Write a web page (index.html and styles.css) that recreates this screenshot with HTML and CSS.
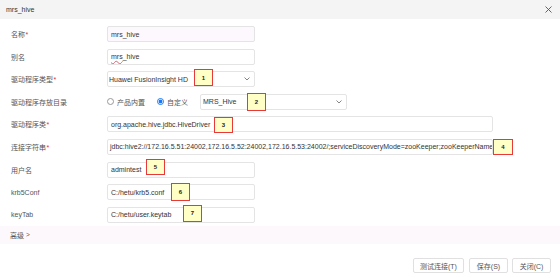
FILE: index.html
```html
<!DOCTYPE html>
<html lang="zh">
<head>
<meta charset="utf-8">
<link rel="stylesheet" href="styles.css">
</head>
<body>
<div class="dialog">
  <div class="titlebar">
    <span class="title">mrs_hive</span>
    <svg class="close" width="7" height="7" viewBox="0 0 7 7"><path d="M0.5 0.5L6.5 6.5M6.5 0.5L0.5 6.5" stroke="#555" stroke-width="0.9" fill="none"/></svg>
  </div>
  <div class="form">
    <div class="row">
      <label class="lbl">名称<span class="req">*</span></label>
      <div class="field w148"><div class="input ro">mrs_hive</div></div>
    </div>
    <div class="row">
      <label class="lbl">别名</label>
      <div class="field w148"><div class="input"><span class="spell">mrs</span>_hive</div></div>
    </div>
    <div class="row">
      <label class="lbl">驱动程序类型<span class="req">*</span></label>
      <div class="field w148">
        <div class="select"><span class="sv">Huawei FusionInsight HD</span><svg class="chev" width="6" height="4" viewBox="0 0 6 4"><path d="M0.5 0.5L3 3L5.5 0.5" stroke="#666" stroke-width="0.8" fill="none"/></svg></div>
        <span class="badge b1">1</span>
      </div>
    </div>
    <div class="row">
      <label class="lbl">驱动程序存放目录</label>
      <div class="radios">
        <span class="radio"><span class="dot"></span>产品内置</span>
        <span class="radio on"><span class="dot"></span>自定义</span>
        <div class="field w147">
          <div class="select"><span class="sv sv2">MRS_Hive</span><svg class="chev" width="6" height="4" viewBox="0 0 6 4"><path d="M0.5 0.5L3 3L5.5 0.5" stroke="#666" stroke-width="0.8" fill="none"/></svg></div>
          <span class="badge b2">2</span>
        </div>
      </div>
    </div>
    <div class="row">
      <label class="lbl">驱动程序类<span class="req">*</span></label>
      <div class="field w386"><div class="input">org.apache.hive.jdbc.HiveDriver</div><span class="badge b3">3</span></div>
    </div>
    <div class="row">
      <label class="lbl">连接字符串<span class="req">*</span></label>
      <div class="field w386"><div class="input tight">jdbc:hive2://172.16.5.51:24002,172.16.5.52:24002,172.16.5.53:24002/;serviceDiscoveryMode=zooKeeper;zooKeeperName</div><span class="badge b4">4</span></div>
    </div>
    <div class="row">
      <label class="lbl">用户名</label>
      <div class="field w148"><div class="input">admintest</div><span class="badge b5">5</span></div>
    </div>
    <div class="row">
      <label class="lbl">krb5Conf</label>
      <div class="field w148"><div class="input">C:/hetu/krb5.conf</div><span class="badge b6">6</span></div>
    </div>
    <div class="row">
      <label class="lbl">keyTab</label>
      <div class="field w148"><div class="input">C:/hetu/user.keytab</div><span class="badge b7">7</span></div>
    </div>
  </div>
  <div class="advanced">高级 <span class="gt">&gt;</span></div>
  <div class="footer">
    <button class="btn bt1">测试连接(T)</button>
    <button class="btn bt2">保存(S)</button>
    <button class="btn bt3">关闭(C)</button>
  </div>
</div>
</body>
</html>
```

FILE: styles.css
```css
* { box-sizing: border-box; }
html, body { margin: 0; padding: 0; background: #fff; }
body {
  width: 560px;
  height: 278px;
  overflow: hidden;
  font-family: "Liberation Sans", "Noto Sans CJK SC", sans-serif;
  font-size: 7px;
  color: #333;
}
.dialog { display: flex; flex-direction: column; height: 278px; }
.titlebar {
  height: 19px;
  background: #f4f4f4;
  display: flex;
  align-items: center;
  justify-content: space-between;
  padding: 0 8px 0 6px;
}
.title { font-size: 7px; color: #333; }
.close { display: block; }
.form {
  display: flex;
  flex-direction: column;
  gap: 6.6px;
  padding: 7px 0 0 11px;
}
.row {
  display: flex;
  align-items: center;
  height: 16px;
}
.lbl { width: 96px; flex: none; color: #555; }
.req { color: #e0303a; margin-left: 0.5px; }
.field { position: relative; height: 16px; flex: none; }
.w148 { width: 148px; }
.w147 { width: 147px; }
.w386 { width: 386px; }
.input, .select {
  height: 16px;
  border: 1px solid #e4e4e4;
  border-radius: 2px;
  background: #fff;
  display: flex;
  align-items: center;
  padding: 0 3px;
  white-space: nowrap;
  overflow: hidden;
  color: #333;
}
.input.ro { background: #fdf8fd; }
.input.tight { padding-left: 2px; }
.spell { text-decoration: underline wavy #e06070; text-decoration-thickness: 0.5px; }
.select { justify-content: space-between; padding: 0 4px 0 1px; }
.sv2 { padding-left: 1px; }
.chev { display: block; }
.radios { display: flex; align-items: center; height: 16px; }
.radio { display: flex; align-items: center; color: #555; }
.radio:first-child { width: 50px; }
.radio.on { width: 43px; }
.dot {
  width: 7px; height: 7px;
  border: 0.8px solid #999;
  border-radius: 50%;
  margin-right: 3px;
  background: #fff;
}
.radio.on .dot {
  border: 1px solid #1677ff;
  background: radial-gradient(circle, #1677ff 0 1.8px, #fff 2.1px);
}
.badge {
  position: absolute;
  width: 19px;
  height: 17px;
  border: 1.3px solid #e5393a;
  background: #ffffc6;
  font-size: 6px;
  font-weight: bold;
  color: #222;
  display: flex;
  align-items: center;
  justify-content: center;
}
.b1 { left: 87px; top: -2px; }
.b2 { left: 47px; top: -1px; height: 18px; }
.b3 { left: 107px; top: 1px; height: 16px; }
.b4 { left: 386px; top: 0; width: 20px; height: 16px; }
.b5 { left: 39px; top: -3px; height: 16px; }
.b6 { left: 64px; top: -1px; height: 18px; }
.b7 { left: 76px; top: -2px; height: 17px; }
.advanced {
  margin-top: 3px;
  height: 18px;
  background: #fcf8fc;
  display: flex;
  align-items: center;
  padding-left: 10px;
  color: #555;
}
.gt { margin-left: 2px; font-size: 6.5px; }
.footer {
  margin-top: auto;
  margin-bottom: 5px;
  display: flex;
  justify-content: flex-end;
  gap: 5px;
  padding-right: 9px;
}
.btn {
  height: 15px;
  border: 1px solid #e0e0e0;
  border-radius: 2px;
  background: #fff;
  font-family: "Liberation Sans", "Noto Sans CJK SC", sans-serif;
  font-size: 7px;
  color: #555;
  padding: 0;
}
.bt1 { width: 51px; }
.bt2 { width: 39px; }
.bt3 { width: 39px; margin-left: -1px; }
```
